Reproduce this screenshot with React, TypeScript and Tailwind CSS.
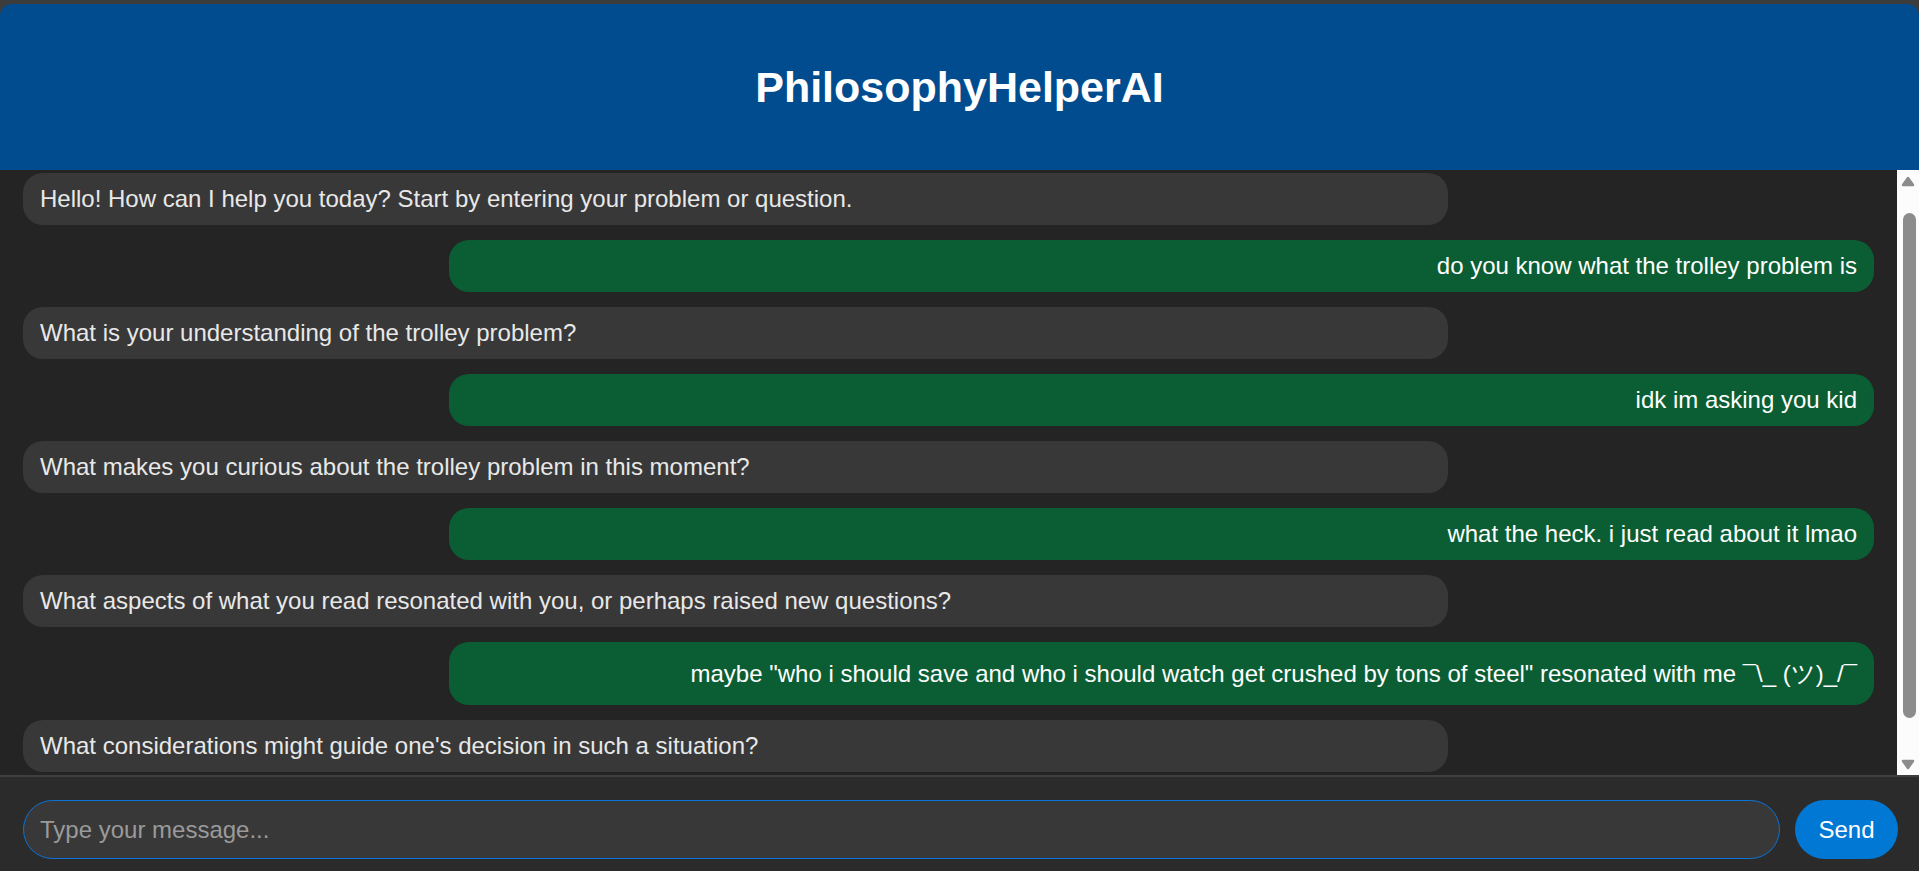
import { useState } from 'react'

type Msg = { id: number; from: 'ai' | 'user'; text: string; tall?: boolean }

const messages: Msg[] = [
  { id: 1, from: 'ai', text: 'Hello! How can I help you today? Start by entering your problem or question.' },
  { id: 2, from: 'user', text: 'do you know what the trolley problem is' },
  { id: 3, from: 'ai', text: 'What is your understanding of the trolley problem?' },
  { id: 4, from: 'user', text: 'idk im asking you kid' },
  { id: 5, from: 'ai', text: 'What makes you curious about the trolley problem in this moment?' },
  { id: 6, from: 'user', text: 'what the heck. i just read about it lmao' },
  { id: 7, from: 'ai', text: 'What aspects of what you read resonated with you, or perhaps raised new questions?' },
  {
    id: 8,
    from: 'user',
    text: 'maybe "who i should save and who i should watch get crushed by tons of steel" resonated with me ¯\\_ (ツ)_/¯',
    tall: true,
  },
  { id: 9, from: 'ai', text: "What considerations might guide one's decision in such a situation?" },
]

function Arrow({ down }: { down?: boolean }) {
  return (
    <div className="h-[22px] w-full flex items-center justify-center">
      <svg width="14" height="11" viewBox="0 0 14 11">
        <polygon
          points={down ? '2,2 12,2 7,9' : '2,9 12,9 7,2'}
          fill="#8c8c8c"
          stroke="#8c8c8c"
          strokeWidth="2.5"
          strokeLinejoin="round"
        />
      </svg>
    </div>
  )
}

export default function App() {
  const [draft, setDraft] = useState('')

  return (
    <div className="h-[871px] flex flex-col bg-[#3c3c3c] pt-[4px] font-['Liberation_Sans',Arial,sans-serif]">
      <header className="h-[166px] shrink-0 bg-[#004c8f] rounded-t-[12px] flex items-center justify-center">
        <h1 className="text-[43px] font-bold text-white leading-none mt-[1px]">PhilosophyHelperAI</h1>
      </header>

      <div className="flex-1 min-h-0 flex bg-[#242424]">
        <div className="flex-1 min-w-0 overflow-hidden flex flex-col gap-[15px] pl-[23px] pr-[23px] pt-[3px]">
          {messages.map(m =>
            m.from === 'ai' ? (
              <div
                key={m.id}
                className="w-[77%] shrink-0 self-start bg-[#383838] text-[#e8e8e8] rounded-[20px] px-[17px] py-3 text-[24px] leading-[28px]"
              >
                {m.text}
              </div>
            ) : (
              <div
                key={m.id}
                className={`w-[77%] shrink-0 self-end bg-[#0b5e33] text-white rounded-[20px] px-[17px] text-right text-[24px] leading-[28px] ${m.tall ? 'pt-[18px] pb-[17px]' : 'py-3'}`}
              >
                {m.text}
              </div>
            )
          )}
        </div>

        {/* scrollbar */}
        <div className="w-[22px] shrink-0 bg-[#fcfcfc] flex flex-col items-center">
          <Arrow />
          <div className="mt-[21px] ml-[2px] h-[505px] w-[13px] rounded-full bg-[#8c8c8c]" />
          <div className="flex-1" />
          <Arrow down />
        </div>
      </div>

      <div className="h-[96px] shrink-0 border-t-2 border-[#3f3f3f] bg-[#2b2b2b] flex items-start gap-[15px] pl-[23px] pr-[21px] pt-[23px]">
        <input
          autoFocus
          value={draft}
          onChange={e => setDraft(e.target.value)}
          placeholder="Type your message..."
          className="flex-1 min-w-0 h-[59px] rounded-full border border-[#0a74da] bg-[#383838] px-[16px] text-[24px] text-white placeholder:text-[#9a9a9a] outline-none caret-white font-['Liberation_Sans',Arial,sans-serif]"
        />
        <button className="w-[103px] h-[59px] shrink-0 rounded-full bg-[#0078d4] text-white text-[24px] font-['Liberation_Sans',Arial,sans-serif]">
          Send
        </button>
      </div>
    </div>
  )
}
